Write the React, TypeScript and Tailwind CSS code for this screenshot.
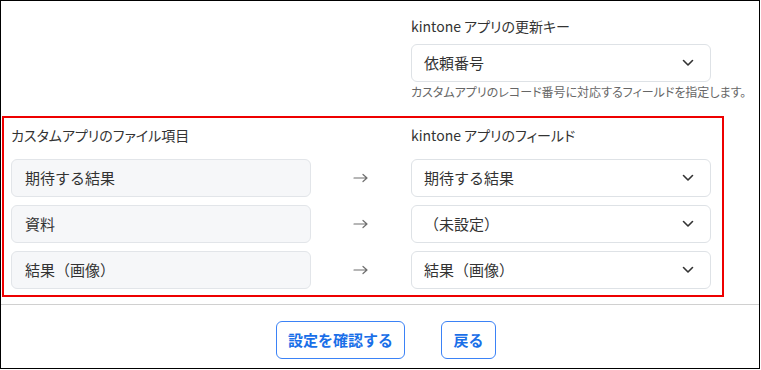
import React from "react";

const font = { fontFamily: '"Noto Sans CJK JP", "Noto Sans", sans-serif' };

function Chevron() {
  return (
    <svg width="12" height="8" viewBox="0 0 12 8" className="shrink-0">
      <path d="M1.5 1.5 L6 6 L10.5 1.5" fill="none" stroke="#333" strokeWidth="1.6" strokeLinecap="round" strokeLinejoin="round" />
    </svg>
  );
}

function Select({ value }: { value: string }) {
  return (
    <div className="w-[300px] h-[38px] rounded-[6px] border border-[#dee2e6] bg-white flex items-center justify-between pl-[12px] pr-[16px] text-[15px] text-[#333]">
      <span>{value}</span>
      <Chevron />
    </div>
  );
}

function Arrow() {
  return (
    <svg width="16" height="10" viewBox="0 0 16 10">
      <path d="M1 5 H14 M10 1.5 L14 5 L10 8.5" fill="none" stroke="#6f6f6f" strokeWidth="1.2" strokeLinecap="round" strokeLinejoin="round" />
    </svg>
  );
}

const rows = [
  { left: "期待する結果", right: "期待する結果" },
  { left: "資料", right: "（未設定）" },
  { left: "結果（画像）", right: "結果（画像）" },
];

const palt = { fontFeatureSettings: '"palt"' };

export default function App() {
  return (
    <div className="w-[761px] h-[370px] bg-white" style={font}>
      <div className="w-[760px] h-[369px] border border-black flex flex-col">
        <div className="pl-[410px] pt-[14px]">
          <div className="text-[14px] text-[#333] leading-[22px]" style={palt}>
            kintone アプリの更新キー
          </div>
          <div className="mt-[7px]">
            <Select value="依頼番号" />
          </div>
          <div className="text-[12px] text-[#666] leading-[18px] mt-[1px] whitespace-nowrap" style={palt}>
            カスタムアプリのレコード番号に対応するフィールドを指定します。
          </div>
        </div>
        <div className="ml-px mt-[15px] w-[722px] h-[181px] border-2 border-[#ee0000] pl-[7px] pt-[6px]">
          <div className="flex">
            <div className="w-[300px] text-[14px] text-[#333] leading-[22px]" style={palt}>
              カスタムアプリのファイル項目
            </div>
            <div className="w-[100px]" />
            <div className="text-[14px] text-[#333] leading-[22px]" style={palt}>
              kintone アプリのフィールド
            </div>
          </div>
          <div className="mt-[13px] flex flex-col gap-[8px]">
            {rows.map((r) => (
              <div key={r.left} className="flex items-center">
                <div className="w-[300px] h-[38px] rounded-[6px] border border-[#e2e5e9] bg-[#f6f7f9] flex items-center pl-[13px] text-[15px] text-[#333]">
                  {r.left}
                </div>
                <div className="w-[100px] flex justify-center">
                  <Arrow />
                </div>
                <Select value={r.right} />
              </div>
            ))}
          </div>
        </div>
        <div className="mt-[7px] border-t border-[#d0d0d0] pt-[16px] pl-[275px] flex gap-[36px]">
          <button className="h-[38px] w-[129px] rounded-[6px] border border-[#3b82f6] text-[#1a6fe8] text-[15px] font-bold bg-white">
            設定を確認する
          </button>
          <button className="h-[38px] w-[55px] rounded-[6px] border border-[#3b82f6] text-[#1a6fe8] text-[15px] font-bold bg-white">
            戻る
          </button>
        </div>
      </div>
    </div>
  );
}
